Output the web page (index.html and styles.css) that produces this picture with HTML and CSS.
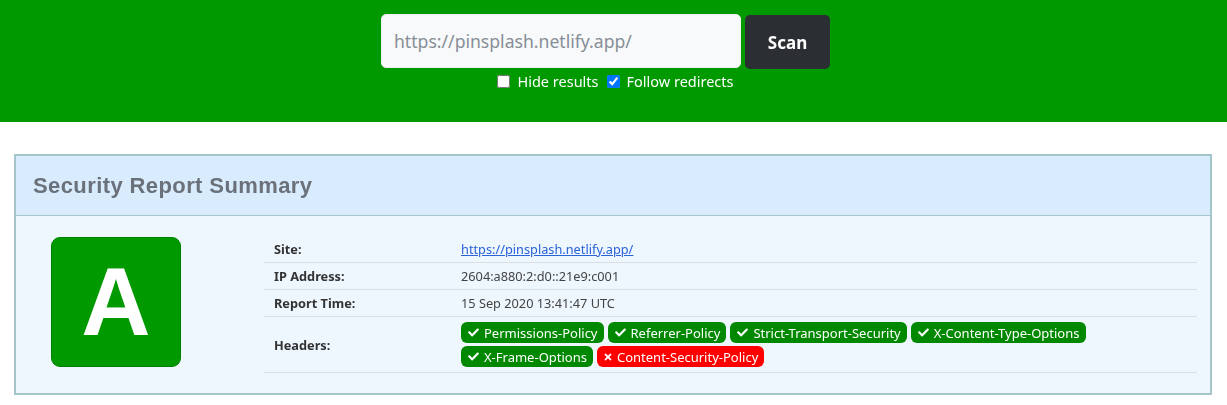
FILE: index.html
```html
<!DOCTYPE html>
<html lang="en">
<head>
<meta charset="utf-8">
<title>Security Report Summary</title>
<link rel="stylesheet" href="styles.css">
</head>
<body>
<header class="topbar">
  <form class="scan-form">
    <div class="scan-row">
      <input class="scan-input" type="text" placeholder="https://pinsplash.netlify.app/" autofocus>
      <button class="scan-btn" type="button">Scan</button>
    </div>
    <div class="options">
      <label class="opt"><input type="checkbox"> Hide results</label>
      <label class="opt"><input type="checkbox" checked> Follow redirects</label>
    </div>
  </form>
</header>

<main class="wrap">
  <section class="card">
    <div class="card-head"><h1>Security Report Summary</h1></div>
    <div class="card-body">
      <div class="grade">A</div>
      <table class="info">
        <tr><th>Site:</th><td><a href="#">https://pinsplash.netlify.app/</a></td></tr>
        <tr><th>IP Address:</th><td>2604:a880:2:d0::21e9:c001</td></tr>
        <tr><th>Report Time:</th><td>15 Sep 2020 13:41:47 UTC</td></tr>
        <tr class="headers-row"><th>Headers:</th><td>
          <div class="badges">
            <span class="badge ok"><svg viewBox="0 0 512 512"><path d="M173.9 439.4l-166.4-166.4c-10-10-10-26.2 0-36.2l36.2-36.2c10-10 26.2-10 36.2 0L192 312.7 432.1 72.6c10-10 26.2-10 36.2 0l36.2 36.2c10 10 10 26.2 0 36.2L210.1 439.4c-10 10-26.2 10-36.2 0z"/></svg>Permissions-Policy</span>
            <span class="badge ok"><svg viewBox="0 0 512 512"><path d="M173.9 439.4l-166.4-166.4c-10-10-10-26.2 0-36.2l36.2-36.2c10-10 26.2-10 36.2 0L192 312.7 432.1 72.6c10-10 26.2-10 36.2 0l36.2 36.2c10 10 10 26.2 0 36.2L210.1 439.4c-10 10-26.2 10-36.2 0z"/></svg>Referrer-Policy</span>
            <span class="badge ok"><svg viewBox="0 0 512 512"><path d="M173.9 439.4l-166.4-166.4c-10-10-10-26.2 0-36.2l36.2-36.2c10-10 26.2-10 36.2 0L192 312.7 432.1 72.6c10-10 26.2-10 36.2 0l36.2 36.2c10 10 10 26.2 0 36.2L210.1 439.4c-10 10-26.2 10-36.2 0z"/></svg>Strict-Transport-Security</span>
            <span class="badge ok"><svg viewBox="0 0 512 512"><path d="M173.9 439.4l-166.4-166.4c-10-10-10-26.2 0-36.2l36.2-36.2c10-10 26.2-10 36.2 0L192 312.7 432.1 72.6c10-10 26.2-10 36.2 0l36.2 36.2c10 10 10 26.2 0 36.2L210.1 439.4c-10 10-26.2 10-36.2 0z"/></svg>X-Content-Type-Options</span>
            <span class="badge ok"><svg viewBox="0 0 512 512"><path d="M173.9 439.4l-166.4-166.4c-10-10-10-26.2 0-36.2l36.2-36.2c10-10 26.2-10 36.2 0L192 312.7 432.1 72.6c10-10 26.2-10 36.2 0l36.2 36.2c10 10 10 26.2 0 36.2L210.1 439.4c-10 10-26.2 10-36.2 0z"/></svg>X-Frame-Options</span>
            <span class="badge bad"><svg viewBox="0 0 352 512"><path d="M242.7 256l100.1-100.1c12.3-12.3 12.3-32.2 0-44.5l-22.2-22.2c-12.3-12.3-32.2-12.3-44.5 0L176 189.3 75.9 89.2c-12.3-12.3-32.2-12.3-44.5 0L9.2 111.4c-12.3 12.3-12.3 32.2 0 44.5L109.3 256 9.2 356.1c-12.3 12.3-12.3 32.2 0 44.5l22.2 22.2c12.3 12.3 32.2 12.3 44.5 0L176 322.7l100.1 100.1c12.3 12.3 32.2 12.3 44.5 0l22.2-22.2c12.3-12.3 12.3-32.2 0-44.5L242.7 256z"/></svg>Content-Security-Policy</span>
          </div>
        </td></tr>
      </table>
    </div>
  </section>
</main>
</body>
</html>
```

FILE: styles.css
```css
* { box-sizing: border-box; }

body {
  margin: 0;
  background: #fff;
  font-family: "Noto Sans", "Open Sans", sans-serif;
  color: #333;
}

.topbar {
  background: #009a00;
  height: 122px;
  padding-top: 14px;
}

.scan-form {
  display: flex;
  flex-direction: column;
  align-items: center;
  padding-right: 16px;
}

.scan-row {
  display: flex;
  gap: 4px;
}

.scan-input {
  width: 360px;
  height: 54px;
  border: 1px solid #eceef0;
  border-radius: 5px;
  background: #f8f9fa;
  padding: 0 12px;
  font-family: "Noto Sans", "Open Sans", sans-serif;
  font-size: 17.6px;
  color: #495057;
  caret-color: #6c757d;
  outline: none;
}

.scan-input::placeholder { color: #868e96; }

.scan-btn {
  width: 85px;
  height: 54px;
  margin-top: 1px;
  border: 0;
  border-radius: 5px;
  background: #2b2e33;
  color: #fff;
  font-family: "Noto Sans", "Open Sans", sans-serif;
  font-weight: 700;
  font-size: 17px;
}

.options {
  display: flex;
  gap: 8px;
  margin-top: 2px;
  margin-left: 20px;
  color: #fff;
  font-size: 14.5px;
}

.opt {
  display: flex;
  align-items: center;
  gap: 4px;
}

.opt input {
  margin: 0 3px 0 0;
  width: 13px;
  height: 13px;
}

.wrap {
  padding: 32px 15px 0 14px;
}

.card {
  border: 2px solid #a4c6ca;
  background: #eef6fe;
}

.card-head {
  background: #d9ecfd;
  border-bottom: 1px solid #a4c6ca;
  height: 60px;
  display: flex;
  align-items: center;
  padding-left: 17px;
}

.card-head h1 {
  margin: 0;
  font-family: "Liberation Sans", Arial, sans-serif;
  font-weight: 700;
  font-size: 22px;
  letter-spacing: 0.4px;
  color: #6a717a;
}

.card-body {
  display: flex;
  align-items: flex-start;
  padding: 20px 13px 20px 35px;
}

.grade {
  flex: none;
  width: 130px;
  height: 130px;
  border: 1px solid #008000;
  border-radius: 9px;
  background: #009900;
  color: #fff;
  font-family: "Liberation Sans", Arial, sans-serif;
  font-weight: 700;
  font-size: 96px;
  line-height: 1;
  display: flex;
  align-items: center;
  justify-content: center;
  margin-top: 1px;
}

.info {
  margin-left: 83px;
  flex: 1;
  border-collapse: collapse;
  font-size: 12.75px;
}

.info th, .info td {
  border-bottom: 1px solid #dcdfe2;
  padding: 4px 10px;
  line-height: 18px;
  text-align: left;
  vertical-align: middle;
}

.info th {
  width: 187px;
  font-weight: 700;
  color: #333;
}

.info td { color: #444; }

.info a { color: #2a62d8; }

.headers-row td { padding: 5px 10px; }

.badges {
  display: flex;
  flex-wrap: wrap;
  gap: 3px 4px;
  max-width: 640px;
}

.badge {
  display: inline-flex;
  align-items: center;
  gap: 5px;
  height: 21px;
  padding: 0 6px 0 7px;
  border-radius: 6px;
  color: #fff;
  font-size: 13px;
}

.badge svg {
  width: 11px;
  height: 11px;
  fill: #fff;
}

.badge.bad svg { width: 8px; height: 10px; }

.ok { background: #008800; }
.bad { background: #ff0000; }
```
